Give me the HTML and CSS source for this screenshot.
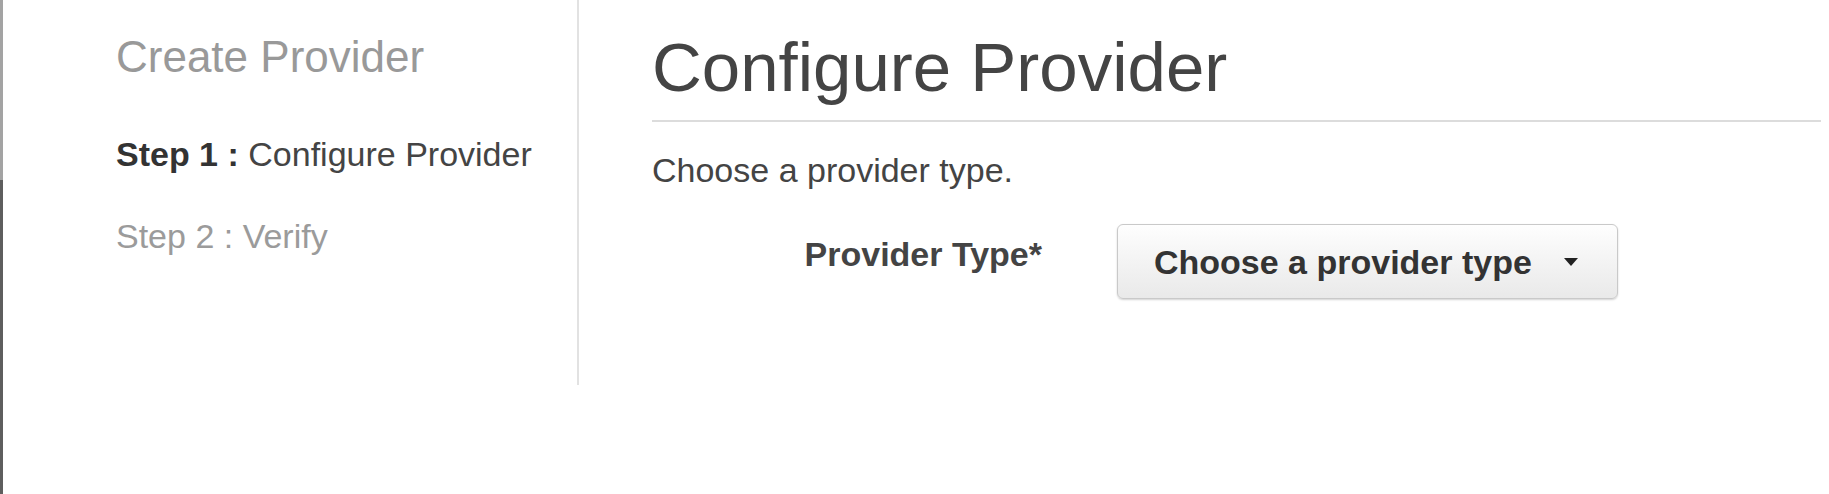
FILE: index.html
```html
<!DOCTYPE html>
<html lang="en">
<head>
<meta charset="utf-8">
<title>Create Provider</title>
<link rel="stylesheet" href="styles.css">
</head>
<body>
<div class="page">
  <div class="edge"></div>
  <aside class="sidebar">
    <h2 class="sidebar-title">Create Provider</h2>
    <ol class="steps">
      <li class="step step-active"><b>Step 1 :</b> Configure Provider</li>
      <li class="step">Step 2 : Verify</li>
    </ol>
  </aside>
  <main class="content">
    <h1 class="heading">Configure Provider</h1>
    <p class="intro">Choose a provider type.</p>
    <div class="field">
      <label class="field-label">Provider Type*</label>
      <button class="select" type="button">Choose a provider type <span class="caret"></span></button>
    </div>
  </main>
</div>
</body>
</html>
```
FILE: styles.css
```css
* { box-sizing: border-box; }
html, body { margin: 0; padding: 0; background: #fff; }
body {
  font-family: "Liberation Sans", Arial, Helvetica, sans-serif;
  color: #444;
}
.page {
  display: flex;
  align-items: flex-start;
  width: 1829px;
  height: 494px;
  overflow: hidden;
}
.edge {
  flex: 0 0 3px;
  height: 494px;
  background: linear-gradient(#a3a3a3 0, #a3a3a3 180px, #5e5e5e 180px, #5e5e5e 100%);
}
.sidebar {
  flex: 0 0 576px;
  height: 385px;
  padding: 31px 0 0 113px;
  border-right: 2px solid #e2e2e2;
}
.sidebar-title {
  margin: 0;
  font-size: 44px;
  line-height: 52px;
  font-weight: normal;
  color: #999;
}
.steps {
  list-style: none;
  margin: 51px 0 0;
  padding: 0;
  display: flex;
  flex-direction: column;
  gap: 42px;
}
.step {
  font-size: 34px;
  line-height: 40px;
  color: #9b9b9b;
}
.step-active { color: #444; }
.step-active b { color: #333; }
.content {
  flex: 1;
  padding: 28px 8px 0 73px;
}
.heading {
  margin: 0;
  font-size: 69px;
  line-height: 80px;
  font-weight: normal;
  color: #444;
  padding-bottom: 12px;
  border-bottom: 2px solid #dcdcdc;
}
.intro {
  margin: 28px 0 0;
  font-size: 34px;
  line-height: 40px;
  color: #444;
}
.field {
  display: flex;
  align-items: flex-start;
  gap: 75px;
  margin-top: 34px;
}
.field-label {
  width: 390px;
  margin-top: 10px;
  text-align: right;
  font-size: 34px;
  line-height: 40px;
  font-weight: bold;
  color: #444;
}
.select {
  display: flex;
  align-items: center;
  width: 501px;
  height: 75px;
  padding: 0 0 0 36px;
  border: 1px solid #c9c9c9;
  border-radius: 6px;
  background: linear-gradient(#fefefe, #e9e9e9);
  box-shadow: 0 1px 2px rgba(0, 0, 0, 0.18);
  font-family: "Liberation Sans", Arial, Helvetica, sans-serif;
  font-size: 34px;
  line-height: 40px;
  font-weight: bold;
  color: #333;
}
.caret {
  margin-left: 32px;
  width: 0;
  height: 0;
  border-left: 7px solid transparent;
  border-right: 7px solid transparent;
  border-top: 8px solid #222;
}
```
